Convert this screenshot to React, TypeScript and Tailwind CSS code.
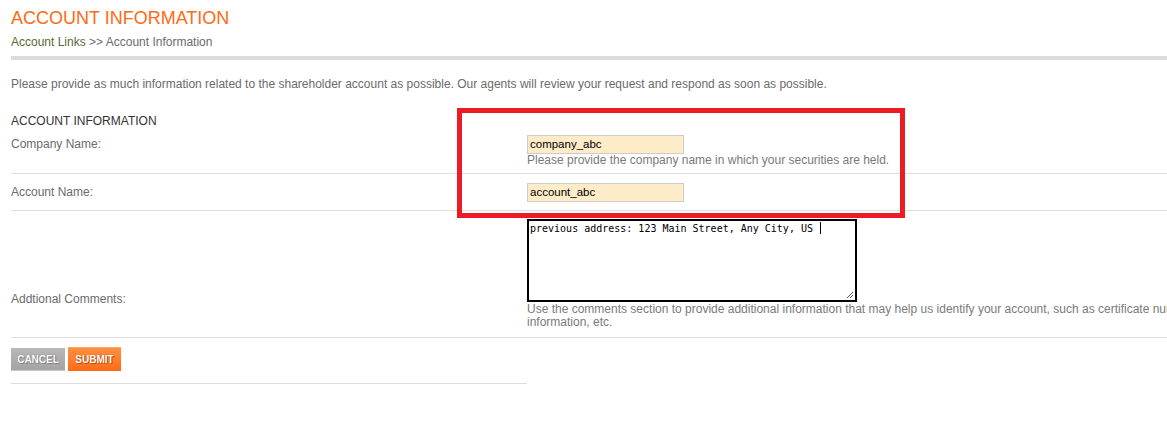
import React from "react";

const Divider = ({ short }: { short?: boolean }) => (
    <div className={short ? "h-px w-[516px] bg-[#dddddd]" : "h-px w-full bg-[#dddddd]"}></div>
);

const Caret = () => <span className="inline-block w-px h-[12px] bg-black align-[-2px] ml-[1px]"></span>;

const App = () => {
    return (
        <div className="w-full h-[440px] bg-white overflow-hidden relative font-['Liberation_Sans',Arial,sans-serif]">
            <div className="w-[1240px] pl-[11px]">
                <h1 className="pt-[7px] text-[18px] leading-[22px] text-[#ff6a13] font-normal">ACCOUNT INFORMATION</h1>
                <div className="mt-[5px] text-[12px] leading-[16px] text-[#6b6b6b]">
                    <span className="text-[#556b2f]">Account Links</span> &gt;&gt; Account Information
                </div>
                <div className="mt-[6px] h-[4px] w-full bg-[#dcdcdc]"></div>

                <p className="mt-[16px] text-[12px] leading-[16px] text-[#6b6b6b]">
                    Please provide as much information related to the shareholder account as possible. Our agents will review your request and respond as soon as possible.
                </p>

                <div className="mt-[21px] text-[12px] leading-[16px] text-[#333333]">ACCOUNT INFORMATION</div>

                {/* company */}
                <div className="grid grid-cols-[516px_1fr] h-[41px] mt-[3px]">
                    <label className="pt-[4px] text-[12px] leading-[16px] text-[#6b6b6b]">Company Name:</label>
                    <div className="pt-[3px]">
                        <div className="w-[157px] h-[19px] bg-[#feecc9] border border-[#cccccc] px-[2px] text-[11.5px] leading-[17px] text-black">company_abc</div>
                        <div className="text-[12px] leading-[13px] text-[#7a7a7a]">Please provide the company name in which your securities are held.</div>
                    </div>
                </div>
                <Divider />

                {/* account */}
                <div className="grid grid-cols-[516px_1fr] h-[36px]">
                    <label className="pt-[10px] text-[12px] leading-[16px] text-[#6b6b6b]">Account Name:</label>
                    <div className="pt-[9px]">
                        <div className="w-[157px] h-[19px] bg-[#feecc9] border border-[#cccccc] px-[2px] text-[11.5px] leading-[17px] text-black">account_abc</div>
                    </div>
                </div>
                <Divider />

                {/* comments */}
                <div className="grid grid-cols-[516px_1fr] h-[126px]">
                    <label className="pt-[80px] text-[12px] leading-[16px] text-[#6b6b6b]">Addtional Comments:</label>
                    <div className="pt-[8px]">
                        <div className="relative w-[330px] h-[83px] border-2 border-black px-[1px] pt-[1px] font-['DejaVu_Sans_Mono',monospace] text-[10px] leading-[13px] text-black">
                            previous address: 123 Main Street, Any City, US <Caret />
                            <svg className="absolute right-[1px] bottom-[1px]" width="9" height="9" viewBox="0 0 9 9">
                                <line x1="8" y1="2" x2="2" y2="8" stroke="#555" strokeWidth="1" />
                                <line x1="8" y1="5" x2="5" y2="8" stroke="#555" strokeWidth="1" />
                            </svg>
                        </div>
                        <div className="pt-[1px] whitespace-nowrap text-[12px] leading-[13px] text-[#7a7a7a]">
                            Use the comments section to provide additional information that may help us identify your account, such as certificate numbers, or other<br />
                            information, etc.
                        </div>
                    </div>
                </div>
                <Divider />

                <div className="flex gap-[3px] pt-[9px] pb-[12px]">
                    <button className="w-[54px] mt-[1px] h-[23px] bg-gradient-to-b from-[#b8b8b8] to-[#a4a4a4] border-b border-[#c8c8c8] text-white font-bold text-[10px] [text-shadow:0_0_1px_#666,1px_1px_0_#888]">CANCEL</button>
                    <button className="w-[53px] h-[24px] bg-gradient-to-b from-[#ff9040] to-[#ff6a12] border-t border-[#ffa566] text-white font-bold text-[10px] [text-shadow:0_0_1px_#a34000,1px_1px_0_#c85000]">SUBMIT</button>
                </div>
                <Divider short />
            </div>

            {/* annotation highlight */}
            <div className="absolute left-[457px] top-[108px] w-[448px] h-[110px] border-[5px] border-[#ed1c24]"></div>
        </div>
    );
};

export default App;
